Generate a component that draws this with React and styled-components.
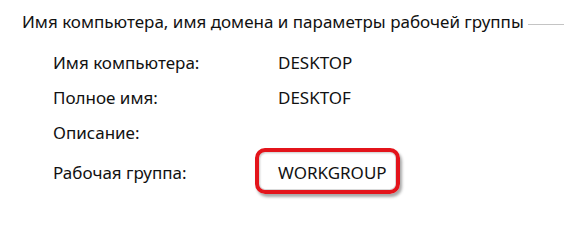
import React from "react";
import styled, { createGlobalStyle } from "styled-components";

const Global = createGlobalStyle`
  html, body {
    margin: 0;
    padding: 0;
    background: #ffffff;
  }
  body {
    font-family: "Noto Sans", "Open Sans", sans-serif;
    color: #111111;
  }
`;

const Group = styled.div`
  width: 564px;
  height: 206px;
  padding: 11px 0 0 22px;
  box-sizing: border-box;
  overflow: hidden;
`;

const Legend = styled.div`
  display: flex;
  align-items: center;
  gap: 4px;
  font-size: 17px;
  line-height: 22px;
  white-space: nowrap;

  &::after {
    content: "";
    flex: 1;
    height: 1px;
    margin-top: 4px;
    background: #c4c4c4;
  }
`;

const Rows = styled.div`
  display: grid;
  grid-template-columns: 225px auto;
  row-gap: 13px;
  padding: 19px 0 0 31px;
  font-size: 17px;
  line-height: 22px;
`;

const Label = styled.div`
  white-space: nowrap;
  margin-top: ${(p) => (p.$marked ? "5px" : "0")};
`;

const Value = styled.div`
  white-space: nowrap;
  min-height: 22px;
  margin-top: ${(p) => (p.$marked ? "5px" : "0")};
`;

const Marked = styled.span`
  position: relative;
  display: inline-block;

  &::before {
    content: "";
    position: absolute;
    left: -23px;
    right: -13px;
    top: -14px;
    bottom: -10px;
    border: 4px solid #e3141b;
    border-radius: 10px;
    box-shadow: 2px 3px 3px rgba(0, 0, 0, 0.35),
      inset 0 0 0 1px #d9d9d9, inset 1px 1px 2px rgba(0, 0, 0, 0.25);
  }
`;

const info = [
  { label: "Имя компьютера:", value: "DESKTOP" },
  { label: "Полное имя:", value: "DESKTOF" },
  { label: "Описание:", value: "" },
  { label: "Рабочая группа:", value: "WORKGROUP", marked: true },
];

export default function App() {
  return (
    <>
      <Global />
      <Group>
        <Legend>Имя компьютера, имя домена и параметры рабочей группы</Legend>
        <Rows>
          {info.map((row) => (
            <React.Fragment key={row.label}>
              <Label $marked={row.marked}>{row.label}</Label>
              <Value $marked={row.marked}>
                {row.marked ? <Marked>{row.value}</Marked> : row.value}
              </Value>
            </React.Fragment>
          ))}
        </Rows>
      </Group>
    </>
  );
}
